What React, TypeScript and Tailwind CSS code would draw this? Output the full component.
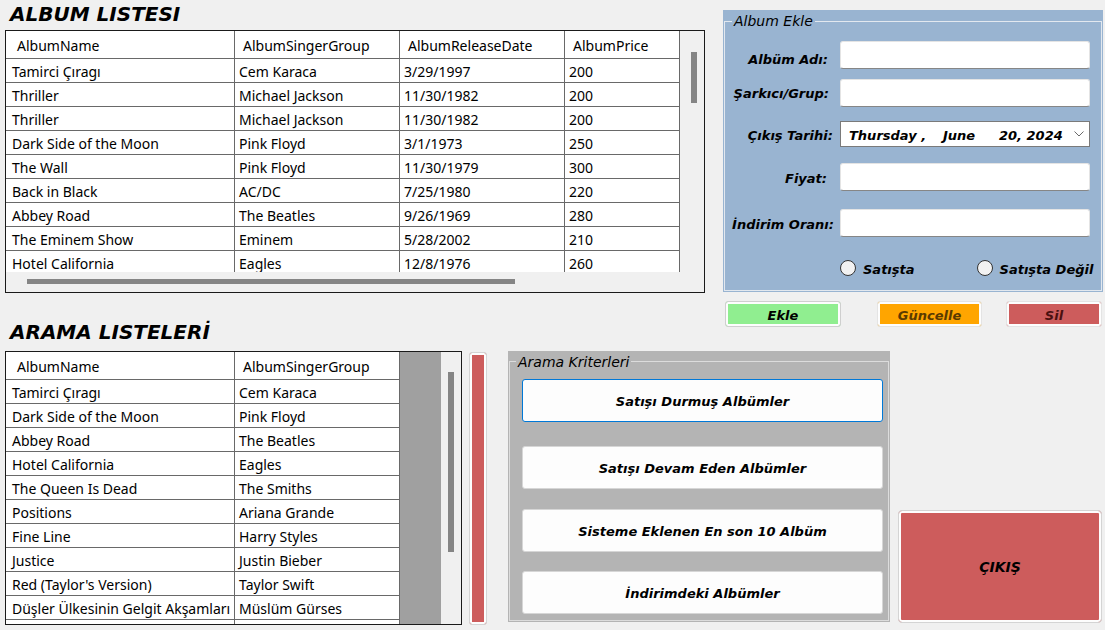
const ALBUMS = [
  ["Tamirci Çıragı", "Cem Karaca", "3/29/1997", "200"],
  ["Thriller", "Michael Jackson", "11/30/1982", "200"],
  ["Thriller", "Michael Jackson", "11/30/1982", "200"],
  ["Dark Side of the Moon", "Pink Floyd", "3/1/1973", "250"],
  ["The Wall", "Pink Floyd", "11/30/1979", "300"],
  ["Back in Black", "AC/DC", "7/25/1980", "220"],
  ["Abbey Road", "The Beatles", "9/26/1969", "280"],
  ["The Eminem Show", "Eminem", "5/28/2002", "210"],
  ["Hotel California", "Eagles", "12/8/1976", "260"],
]

const SEARCH = [
  ["Tamirci Çıragı", "Cem Karaca"],
  ["Dark Side of the Moon", "Pink Floyd"],
  ["Abbey Road", "The Beatles"],
  ["Hotel California", "Eagles"],
  ["The Queen Is Dead", "The Smiths"],
  ["Positions", "Ariana Grande"],
  ["Fine Line", "Harry Styles"],
  ["Justice", "Justin Bieber"],
  ["Red (Taylor's Version)", "Taylor Swift"],
  ["Düşler Ülkesinin Gelgit Akşamları", "Müslüm Gürses"],
  ["", ""],
]

type Col = { title: string; w: string; hp: string; cp: string }

const COLS: Col[] = [
  { title: "AlbumName",        w: "w-[229px]", hp: "pl-[11px]", cp: "pl-[6px]" },
  { title: "AlbumSingerGroup", w: "w-[165px]", hp: "pl-[8px]",  cp: "pl-[4px]" },
  { title: "AlbumReleaseDate", w: "w-[165px]", hp: "pl-[8px]",  cp: "pl-[4px]" },
  { title: "AlbumPrice",       w: "w-[115px]", hp: "pl-[8px]",  cp: "pl-[4px]" },
]

function GridHeader({ cols }: { cols: Col[] }) {
  return (
    <div className="flex h-[28px] shrink-0">
      {cols.map((c) => (
        <div key={c.title} className={`${c.w} ${c.hp} shrink-0 flex items-center pt-[2px] border-r border-b border-[#696969] whitespace-nowrap`}>
          {c.title}
        </div>
      ))}
    </div>
  )
}

function GridRow({ cols, cells }: { cols: Col[]; cells: string[] }) {
  return (
    <div className="flex h-[24px] shrink-0">
      {cols.map((c, i) => (
        <div key={c.title} className={`${c.w} ${c.cp} shrink-0 flex items-center pt-[2px] border-r border-b border-[#696969] whitespace-nowrap overflow-hidden`}>
          {cells[i]}
        </div>
      ))}
    </div>
  )
}

function TextBox() {
  return <div className="w-[250px] h-[28px] bg-white border border-[#e4e4e4] border-b-[#868686] rounded-[3px]" />
}

function FormRow({ label, pr, pt, mt, children }: { label: string; pr: string; pt: string; mt: string; children: React.ReactNode }) {
  return (
    <div className={`flex items-center ${mt}`}>
      <div className={`w-[109px] text-right whitespace-nowrap ${pr} ${pt}`}>{label}</div>
      <div className="ml-[6px]">{children}</div>
    </div>
  )
}

function Radio({ label }: { label: string }) {
  return (
    <div className="flex items-center">
      <span className="w-[16px] h-[16px] rounded-full border border-[#333333] bg-[#f2f2f2]" />
      <span className="ml-[7px] pt-[2px]">{label}</span>
    </div>
  )
}

function SearchButton({ text, mt, focused }: { text: string; mt: string; focused?: boolean }) {
  return (
    <button
      className={`${mt} ml-[12px] w-[361px] h-[43px] shrink-0 rounded-[3px] bg-[#fdfdfd] border ${focused ? "border-[#0078d7]" : "border-[#d6d6d6]"} flex items-center justify-center pt-[2px]`}
    >
      {text}
    </button>
  )
}

export default function App() {
  return (
    <div className="w-[1105px] h-[630px] overflow-hidden bg-[#f0f0f0] text-black font-['Noto_Sans',sans-serif] text-[14px] leading-none">
      {/* Üst bölüm */}
      <div className="flex items-start">
        <div className="ml-[5px] w-[700px] flex flex-col">
          <div className="h-[30px] pt-[2px] pl-[5px] font-['DejaVu_Sans',sans-serif] font-bold italic text-[20px] leading-[24px]">
            ALBUM LISTESI
          </div>

          {/* Album listesi grid */}
          <div className="w-[700px] h-[263px] border border-[#1a1a1a] bg-white flex flex-col">
            <div className="flex h-[241px]">
              <div className="w-[674px] flex flex-col overflow-hidden">
                <GridHeader cols={COLS} />
                {ALBUMS.map((r, i) => (
                  <GridRow key={i} cols={COLS} cells={r} />
                ))}
              </div>
              <div className="w-[24px] bg-[#f0f0f0] pl-[11px] pt-[21px]">
                <div className="w-[6px] h-[51px] bg-[#858585]" />
              </div>
            </div>
            <div className="h-[20px] bg-[#f0f0f0] pl-[21px] pt-[7px]">
              <div className="w-[488px] h-[5px] bg-[#858585]" />
            </div>
          </div>

          <div className="mt-[27px] h-[24px] pl-[5px] font-['DejaVu_Sans',sans-serif] font-bold italic text-[20px] leading-[24px]">
            ARAMA LISTELERİ
          </div>
        </div>

        {/* Album Ekle */}
        <div className="ml-[18px] w-[380px] flex flex-col font-['DejaVu_Sans',sans-serif] font-bold italic text-[13px]">
          <div className="mt-[10px] h-[282px] bg-[#99b4d1] pl-[1px] pr-[1px] pt-[3px] pb-[1px]">
            <fieldset className="h-full border border-[#e2e8ef] flex flex-col">
              <legend className="ml-[7px] px-[2px] leading-[16px] font-normal text-[14px]">Album Ekle</legend>
              <FormRow label="Albüm Adı:" pr="pr-[6px]" pt="pt-[8px]" mt="mt-[12px]"><TextBox /></FormRow>
              <FormRow label="Şarkıcı/Grup:" pr="pr-[5px]" pt="pt-[1px]" mt="mt-[10px]"><TextBox /></FormRow>
              <FormRow label="Çıkış Tarihi:" pr="pr-[1px]" pt="pt-[3px]" mt="mt-[14px]">
                <div className="w-[250px] h-[26px] bg-white border border-[#7a7a7a] flex items-center pl-[8px] pr-[5px] text-[13px]">
                  <span className="w-[94px] pt-[2px]">Thursday ,</span>
                  <span className="w-[56px] pt-[2px]">June</span>
                  <span className="pt-[2px] whitespace-pre">20, 2024</span>
                  <svg className="ml-auto" width="10" height="6" viewBox="0 0 10 6">
                    <path d="M0.5 0.5 L5 5 L9.5 0.5" stroke="#6a6a6a" strokeWidth="1" fill="none" />
                  </svg>
                </div>
              </FormRow>
              <FormRow label="Fiyat:" pr="pr-[7px]" pt="pt-[3px]" mt="mt-[16px]"><TextBox /></FormRow>
              <FormRow label="İndirim Oranı:" pr="pr-[0px]" pt="pt-[2px]" mt="mt-[18px]"><TextBox /></FormRow>
              <div className="mt-[23px] flex items-center pl-[115px]">
                <Radio label="Satışta" />
                <div className="ml-[62px]">
                  <Radio label="Satışta Değil" />
                </div>
              </div>
            </fieldset>
          </div>

          <div className="mt-[9px] h-[26px] flex">
            <button className="ml-[2px] w-[116px] h-full rounded-[3px] border border-[#cfcfcf] bg-[#90ee90] shadow-[inset_0_0_0_2px_#fdfdfd] pt-[2px]">
              Ekle
            </button>
            <button className="ml-[36px] w-[105px] h-full rounded-[3px] border border-[#e4e4e4] bg-[#ffa500] shadow-[inset_0_0_0_2px_#fdfdfd] pt-[2px] text-[#5a3a00]">
              Güncelle
            </button>
            <button className="ml-[24px] w-[96px] h-full rounded-[3px] border border-[#e4e4e4] bg-[#cd5c5c] shadow-[inset_0_0_0_2px_#fdfdfd] pt-[2px] text-[#4a1010]">
              Sil
            </button>
          </div>
        </div>
      </div>

      {/* Alt bölüm */}
      <div className="mt-[7px] flex items-start">
        <div className="ml-[5px] w-[457px] h-[274px] border border-[#1a1a1a] bg-white flex">
          <div className="w-[394px] flex flex-col overflow-hidden">
            <GridHeader cols={COLS.slice(0, 2)} />
            {SEARCH.map((r, i) => (
              <GridRow key={i} cols={COLS.slice(0, 2)} cells={r} />
            ))}
          </div>
          <div className="w-[41px] bg-[#a0a0a0]" />
          <div className="w-[20px] bg-[#f0f0f0] pl-[7px] pt-[20px]">
            <div className="w-[6px] h-[180px] bg-[#858585]" />
          </div>
        </div>

        <div className="ml-[7px] mt-[1px] w-[18px] h-[273px] rounded-[3px] border border-[#d4d4d4] bg-[#cd5c5c] shadow-[inset_0_0_0_2px_#fdfdfd]" />

        {/* Arama Kriterleri */}
        <div className="ml-[21px] w-[382px] h-[271px] bg-[#b4b4b4] px-[1px] pt-[2px] pb-[1px] font-['DejaVu_Sans',sans-serif] font-bold italic text-[13px]">
          <fieldset className="h-full border border-[#dcdcdc] flex flex-col">
            <legend className="ml-[6px] px-[2px] leading-[16px] font-normal text-[14px] pt-[1px]">Arama Kriterleri</legend>
            <SearchButton text="Satışı Durmuş Albümler" mt="mt-[9px]" focused />
            <SearchButton text="Satışı Devam Eden Albümler" mt="mt-[24px]" />
            <SearchButton text="Sisteme Eklenen En son 10 Albüm" mt="mt-[20px]" />
            <SearchButton text="İndirimdeki Albümler" mt="mt-[19px]" />
          </fieldset>
        </div>

        <button className="ml-[8px] mt-[159px] w-[204px] h-[113px] rounded-[4px] border border-[#d4d4d4] bg-[#cd5c5c] shadow-[inset_0_0_0_2px_#fdfdfd] font-['DejaVu_Sans',sans-serif] font-bold italic text-[14px] flex items-center justify-center">
          ÇIKIŞ
        </button>
      </div>
    </div>
  )
}
